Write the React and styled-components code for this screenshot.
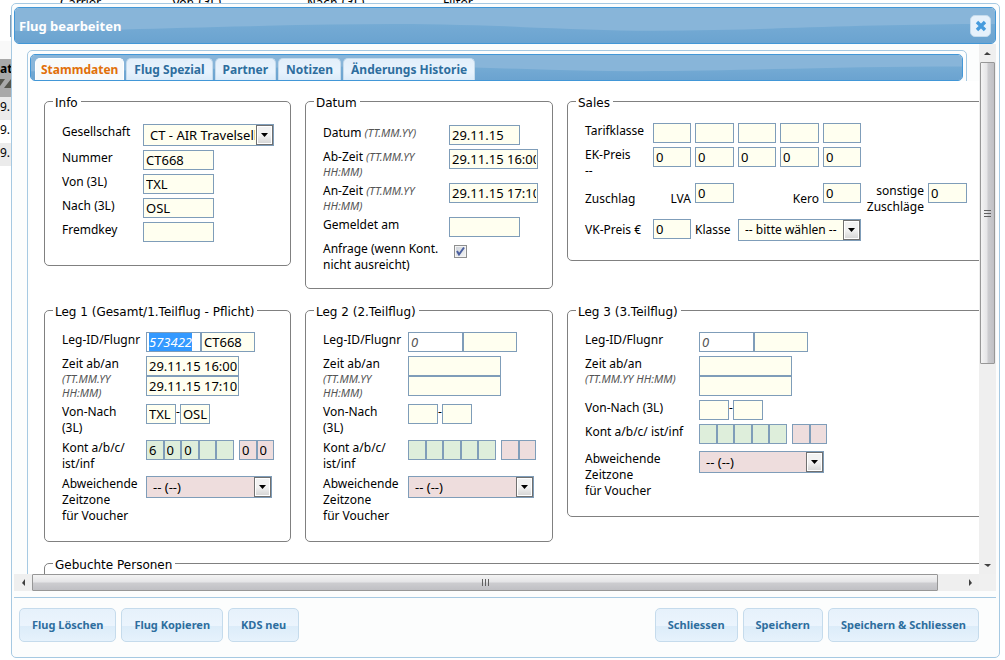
import React, { useEffect, useRef } from "react";
import styled, { createGlobalStyle, css } from "styled-components";

const UI = `"Noto Sans", "Open Sans", sans-serif`;
const VERDANA = `"DejaVu Sans", sans-serif`;

const GlobalStyle = createGlobalStyle`
  * { box-sizing: border-box; }
  html, body { margin: 0; height: 100%; overflow: hidden; background: #fff; }
  body { font: 12px/16px ${UI}; color: #000; }
  input, select, button { font: inherit; color: inherit; margin: 0; }
  ::selection { background: #3399ff; color: #fff; }
`;

/* ---------- page behind the dialog ---------- */

const Backdrop = styled.div`
  height: 100vh;
  overflow: hidden;
`;

const FilterHeads = styled.div`
  display: grid;
  grid-template-columns: 112px 135px 136px 1fr;
  padding-left: 60px;
  margin-top: -5px;
  height: 20px;
  font: 12px/16px ${VERDANA};
`;

const FilterEdge = styled.div`
  width: 11px;
  height: 22px;
  border-right: 1px solid #7f9db9;
  margin-bottom: 4px;
`;

const GridStub = styled.div`
  width: 300px;
  background: #f9f9f9;
  padding-top: 18px;
`;

const GridHead = styled.div`
  height: 38px;
  background: #a9a9a9;
  font-weight: 700;
  line-height: 20px;
  svg { display: block; }
`;

const GridRow = styled.div`
  height: 23px;
  line-height: 20px;
  background: ${(p) => (p.$even ? "#fff" : "#ebebeb")};
`;

/* ---------- dialog ---------- */

const Dialog = styled.section`
  position: fixed;
  inset: 3px 5px 2px 11px;
  display: flex;
  flex-direction: column;
  padding: 3px 3px 15px 2px;
  border: 1px solid #a6c9e2;
  border-radius: 5px;
  background: #fcfdfd;
`;

const barStyle = css`
  position: relative;
  border: 1px solid #4297d7;
  border-radius: 5px;
  overflow: hidden;
`;

const TitleBar = styled.header`
  ${barStyle}
  flex: none;
  display: flex;
  align-items: center;
  justify-content: space-between;
  height: 37px;
  padding: 0 4px;
`;

const Title = styled.h1`
  position: relative;
  margin: 0;
  font-size: 13px;
  line-height: 16px;
  color: #fff;
`;

const CloseButton = styled.button`
  position: relative;
  width: 21px;
  height: 22px;
  padding: 0;
  display: grid;
  place-items: center;
  border: 1px solid #c5dbec;
  border-radius: 5px;
  background: #e6f1fb;
`;

const GlossSvg = styled.svg`
  position: absolute;
  inset: 0;
  width: 100%;
  height: 100%;
`;

const Middle = styled.div`
  flex: 1;
  min-height: 0;
  display: grid;
  grid-template-columns: minmax(0, 1fr) 17px;
  grid-template-rows: minmax(0, 1fr) 17px;
  background: #f0f0f0;
`;

const Viewport = styled.div`
  overflow: hidden;
  padding: 6px 12px 0 13px;
  background: #fcfdfd;
`;

const Tabs = styled.div`
  height: 900px;
  padding: 3px 3px 0 2px;
  border: 1px solid #a6c9e2;
  border-radius: 5px;
`;

const TabBar = styled.nav`
  ${barStyle}
  height: 27px;
  padding: 3px 4px 0;
  display: flex;
  gap: 2px;
`;

const Tab = styled.button`
  position: relative;
  height: ${(p) => (p.$active ? 23 : 22)}px;
  padding: 0 ${(p) => (p.$active ? 5 : 7)}px;
  border: 1px solid ${(p) => (p.$active ? "#fff" : "#c5dbec")};
  border-bottom: 0;
  border-radius: 5px 5px 0 0;
  background: ${(p) =>
    p.$active ? "#f7fafb" : "linear-gradient(#e3effa, #e8f3fd 60%, #dbebf9)"};
  color: ${(p) => (p.$active ? "#e17009" : "#2e6e9e")};
  font-weight: 700;
  white-space: nowrap;
`;

const Panel = styled.div`
  width: calc(100% + 40px);
  height: 100%;
  padding: 10px 0 0 14px;
  background: #fff;
`;

const Band = styled.div`
  display: grid;
  grid-template-columns: 247px 248px minmax(480px, 1fr);
  align-items: start;
  gap: 14px;
  margin-bottom: 11px;
`;

const Group = styled.fieldset`
  min-width: 0;
  margin: 0;
  padding: ${(p) => p.$top ?? 12}px 8px ${(p) => p.$bottom ?? 17}px;
  border: 1px solid #808080;
  border-radius: 5px;
  ${(p) => p.$full && "grid-column: 1 / -1;"}
`;

const Legend = styled.legend`
  padding: 4px 3px 0 2px;
  font: 12px/16px ${VERDANA};
`;

const Rows = styled.div`
  display: grid;
  grid-template-columns: ${(p) => p.$label}px 1fr;
  gap: 4px 0;
  padding-left: 9px;
`;

const SalesGrid = styled.div`
  display: grid;
  grid-template-columns: 64px 38px 39px 38px 39px 38px 59px 39px;
  gap: 4px;
  padding-left: 9px;
`;

const Label = styled.label`
  display: block;
  white-space: pre-line;
  ${(p) => p.$spaced && "margin-top: 3px;"}
  ${(p) => p.$middle && "align-self: center;"}
  ${(p) => p.$right && "text-align: right; justify-self: end;"}
  ${(p) => p.$column && `grid-column: ${p.$column};`}
`;

const Hint = styled.em`
  font-size: 11px;
  line-height: 14px;
  color: #555;
`;

const HintLine = styled(Hint)`
  display: block;
`;

const Line = styled.div`
  display: flex;
  align-items: flex-start;
  ${(p) => p.$stack && "flex-direction: column;"}
`;

const tones = { cream: "#fffff0", white: "#fff", green: "#deeedb", pink: "#eedddd" };

const Text = styled.input`
  width: ${(p) => (p.$w ? `${p.$w}px` : "100%")};
  min-width: 0;
  height: 20px;
  padding: 0 1px 0 2px;
  border: 1px solid #7f9db9;
  border-radius: 0;
  background: ${(p) => tones[p.$tone || "cream"]};
  font-size: 13px;
  outline: 0;
  ${(p) => p.$italic && "font-style: italic; color: #555;"}
`;

const Cells = styled.div`
  display: flex;
  width: ${(p) => p.$w}px;
  margin-right: 5px;
`;

const SelectBox = styled.div`
  position: relative;
  align-self: start;
  width: ${(p) => (p.$w ? `${p.$w}px` : "auto")};
  ${(p) => p.$spaced && "margin-top: 3px;"}
  ${(p) => p.$column && `grid-column: ${p.$column};`}
  select {
    appearance: none;
    display: block;
    width: 100%;
    height: 22px;
    padding: 0 18px 0 6px;
    border: 1px solid #7f9db9;
    border-radius: 0;
    background: ${(p) => tones[p.$tone || "cream"]};
    font-size: ${(p) => (p.$large ? 13 : 12)}px;
    outline: 0;
  }
`;

const DropMark = styled.span`
  position: absolute;
  top: 1px;
  right: 1px;
  bottom: 1px;
  width: 17px;
  display: grid;
  place-items: center;
  border: 1px solid #707070;
  box-shadow: inset 0 0 0 1px #fff;
  background: linear-gradient(#f2f2f2 50%, #d4d4d4);
  pointer-events: none;
`;

const CheckWrap = styled.span`
  position: relative;
  width: 13px;
  height: 13px;
  margin: 4px 0 0 5px;
  input {
    appearance: none;
    display: block;
    width: 13px;
    height: 13px;
    border: 1px solid #8e8f8f;
    box-shadow: inset 0 0 0 1px #f4f4f4;
    background: linear-gradient(135deg, #cdd2d8, #f4f5f6);
  }
  svg {
    position: absolute;
    inset: 0;
    pointer-events: none;
  }
`;

/* ---------- scroll bars ---------- */

const ScrollBar = styled.div`
  display: flex;
  flex-direction: ${(p) => (p.$vertical ? "column" : "row")};
  padding: ${(p) => (p.$vertical ? "0 1px" : "0")};
  background: #efefef;
`;

const Arrow = styled.span`
  flex: 0 0 18px;
  display: grid;
  place-items: center;
`;

const Thumb = styled.span`
  flex: ${(p) => p.$grow} 0 0;
  display: grid;
  place-items: center;
  border: 1px solid #979797;
  border-radius: 1px;
  background: linear-gradient(
    ${(p) => (p.$vertical ? "to right" : "to bottom")},
    #f4f4f4, #e4e4e6 48%, #cdcdd0 52%, #c0c0c4
  );
`;

const Track = styled.span`
  flex: ${(p) => p.$grow} 0 0;
`;

/* ---------- footer ---------- */

const Footer = styled.footer`
  flex: none;
  display: flex;
  justify-content: space-between;
  margin-top: 6px;
  padding: 10px 17px 0 5px;
  border-top: 1px solid #a6c9e2;
`;

const ButtonSet = styled.div`
  display: flex;
  gap: 5px;
`;

const Button = styled.button`
  height: 34px;
  padding: 0 12px;
  border: 1px solid #c5dbec;
  border-radius: 5px;
  background: linear-gradient(#e6f1fb, #ebf4fd 52%, #dcecf9 54%, #e6f2fc);
  color: #2e6e9e;
  font-size: 11px;
  font-weight: 700;
  white-space: nowrap;
`;

/* ---------- parts ---------- */

const Gloss = () => (
  <GlossSvg viewBox="0 0 982 37" preserveAspectRatio="none" aria-hidden="true">
    <defs>
      <linearGradient id="gloss-low" x1="0" y1="0" x2="0" y2="1">
        <stop offset="0" stopColor="#75abd4" />
        <stop offset="1" stopColor="#6ba3d0" />
      </linearGradient>
    </defs>
    <rect width="982" height="37" fill="#88b5d9" />
    <path
      d="M0 24C90 25 240 17 380 17C480 17 560 24 640 24C740 24 840 17 982 17V37H0Z"
      fill="url(#gloss-low)"
    />
  </GlossSvg>
);

const arrows = {
  up: "M0 4L3 1L7 4Z",
  down: "M0 1H7L4 4Z",
  left: "M4 0V7L1 4Z",
  right: "M1 0V7L4 4Z",
};

const ArrowIcon = ({ dir }) => (
  <Arrow>
    <svg width="7" height="7" viewBox={dir === "up" || dir === "down" ? "0 -1 7 7" : "-1 0 7 7"}>
      <path d={arrows[dir]} fill="#404040" />
    </svg>
  </Arrow>
);

const Grip = ({ vertical }) => (
  <svg width="9" height="9" viewBox="0 0 9 9" shapeRendering="crispEdges">
    <path
      d={vertical ? "M1 1.5H8M1 4.5H8M1 7.5H8" : "M1.5 1V8M4.5 1V8M7.5 1V8"}
      stroke="#606060"
    />
  </svg>
);

const Select = ({ w, tone, column, label, id, value, large, spaced }) => (
  <SelectBox $w={w} $tone={tone} $column={column} $large={large} $spaced={spaced}>
    <select id={id} aria-label={label} defaultValue={value}>
      <option>{value}</option>
    </select>
    <DropMark>
      <svg width="7" height="4" viewBox="0 0 7 4">
        <path d="M0 0H7L3.5 4Z" fill="#000" />
      </svg>
    </DropMark>
  </SelectBox>
);

const LegGroup = ({ n, title, open, labelWidth, data, bottom }) => {
  const first = useRef(null);
  useEffect(() => {
    if (n === 1 && first.current) {
      first.current.focus({ preventScroll: true });
      first.current.select();
    }
  }, [n]);
  const id = (s) => `leg${n}-${s}`;
  return (
    <Group $bottom={bottom}>
      <Legend>{title}</Legend>
      <Rows $label={labelWidth}>
        <Label htmlFor={id("id")}>Leg-ID/Flugnr</Label>
        <Line>
          <Text ref={first} id={id("id")} $w={55} $tone="white" $italic defaultValue={data.id} />
          <Text $w={54} aria-label="Flugnr" defaultValue={data.nr} />
        </Line>

        <Label htmlFor={id("ab")}>
          Zeit ab/an
          {open ? (
            <HintLine>(TT.MM.YY HH:MM)</HintLine>
          ) : (
            <>
              <HintLine>(TT.MM.YY</HintLine>
              <HintLine>HH:MM)</HintLine>
            </>
          )}
        </Label>
        <Line $stack>
          <Text id={id("ab")} $w={93} defaultValue={data.ab} />
          <Text $w={93} aria-label="Zeit an" defaultValue={data.an} />
        </Line>

        <Label htmlFor={id("von")}>{open ? "Von-Nach (3L)" : "Von-Nach\n(3L)"}</Label>
        <Line>
          <Text id={id("von")} $w={30} defaultValue={data.von} />-
          <Text $w={30} aria-label="Nach" defaultValue={data.nach} />
        </Line>

        <Label htmlFor={id("k0")}>{open ? "Kont a/b/c/ ist/inf" : "Kont a/b/c/\nist/inf"}</Label>
        <Line>
          <Cells $w={88}>
            {data.kont.map((v, i) => (
              <Text key={i} id={id(`k${i}`)} aria-label={`Kont ${i + 1}`} $tone="green" defaultValue={v} />
            ))}
          </Cells>
          <Cells $w={35}>
            {data.inf.map((v, i) => (
              <Text key={i} aria-label={`inf ${i + 1}`} $tone="pink" defaultValue={v} />
            ))}
          </Cells>
        </Line>

        <Label htmlFor={id("zone")} $spaced={open}>{"Abweichende\nZeitzone\nfür Voucher"}</Label>
        <Select id={id("zone")} w={open ? 125 : 126} tone="pink" value="-- (--)" large spaced={open} />
      </Rows>
    </Group>
  );
};

const emptyLeg = {
  id: "0", nr: "", ab: "", an: "", von: "", nach: "",
  kont: ["", "", "", "", ""], inf: ["", ""],
};
const firstLeg = {
  id: "573422", nr: "CT668", ab: "29.11.15 16:00", an: "29.11.15 17:10",
  von: "TXL", nach: "OSL", kont: ["6", "0", "0", "", ""], inf: ["0", "0"],
};

export default function App() {
  return (
    <>
      <GlobalStyle />
      <Backdrop>
        <FilterHeads>
          <span>Carrier</span>
          <span>Von (3L)</span>
          <span>Nach (3L)</span>
          <span>Filter</span>
        </FilterHeads>
        <FilterEdge />
        <GridStub>
          <GridHead>
            at
            <svg width="14" height="10" viewBox="0 0 14 10">
              <path d="M0 0H5L0 7ZM11 0V9H4Z" fill="#55554d" />
            </svg>
          </GridHead>
          <GridRow>9.</GridRow>
          <GridRow $even>9.</GridRow>
          <GridRow>9.</GridRow>
        </GridStub>
      </Backdrop>

      <Dialog role="dialog" aria-labelledby="dialog-title">
        <TitleBar>
          <Gloss />
          <Title id="dialog-title">Flug bearbeiten</Title>
          <CloseButton type="button" aria-label="Schließen">
            <svg width="12" height="12" viewBox="0 0 12 12">
              <path d="M2 2L10 10M10 2L2 10" stroke="#469bdd" strokeWidth="3.4" />
            </svg>
          </CloseButton>
        </TitleBar>

        <Middle>
          <Viewport>
            <Tabs>
              <TabBar>
                <Gloss />
                <Tab type="button" $active>Stammdaten</Tab>
                <Tab type="button">Flug Spezial</Tab>
                <Tab type="button">Partner</Tab>
                <Tab type="button">Notizen</Tab>
                <Tab type="button">Änderungs Historie</Tab>
              </TabBar>
              <Panel>
                <Band>
                  <Group $top={13} $bottom={23}>
                    <Legend>Info</Legend>
                    <Rows $label={81}>
                      <Label htmlFor="airline">Gesellschaft</Label>
                      <Select id="airline" w={131} value="CT - AIR Travelseller" large />
                      <Label htmlFor="number">Nummer</Label>
                      <Text id="number" $w={71} defaultValue="CT668" />
                      <Label htmlFor="from">Von (3L)</Label>
                      <Text id="from" $w={71} defaultValue="TXL" />
                      <Label htmlFor="to">Nach (3L)</Label>
                      <Text id="to" $w={71} defaultValue="OSL" />
                      <Label htmlFor="key">Fremdkey</Label>
                      <Text id="key" $w={71} />
                    </Rows>
                  </Group>

                  <Group $top={14} $bottom={15}>
                    <Legend>Datum</Legend>
                    <Rows $label={126}>
                      <Label htmlFor="date">Datum <Hint>(TT.MM.YY)</Hint></Label>
                      <Text id="date" $w={71} defaultValue="29.11.15" />
                      <Label htmlFor="dep">
                        Ab-Zeit <Hint>(TT.MM.YY</Hint>
                        <HintLine>HH:MM)</HintLine>
                      </Label>
                      <Text id="dep" $w={89} defaultValue="29.11.15 16:00" />
                      <Label htmlFor="arr">
                        An-Zeit <Hint>(TT.MM.YY</Hint>
                        <HintLine>HH:MM)</HintLine>
                      </Label>
                      <Text id="arr" $w={89} defaultValue="29.11.15 17:10" />
                      <Label htmlFor="reported">Gemeldet am</Label>
                      <Text id="reported" $w={71} />
                      <Label htmlFor="request">{"Anfrage (wenn Kont.\nnicht ausreicht)"}</Label>
                      <CheckWrap>
                        <input id="request" type="checkbox" defaultChecked />
                        <svg width="13" height="13" viewBox="0 0 13 13">
                          <path d="M3 6L5 9.5L10 2.5" fill="none" stroke="#4b5f9f" strokeWidth="2" />
                        </svg>
                      </CheckWrap>
                    </Rows>
                  </Group>

                  <Group $bottom={19}>
                    <Legend>Sales</Legend>
                    <SalesGrid>
                      <Label htmlFor="tk0">Tarifklasse</Label>
                      {[0, 1, 2, 3, 4].map((i) => (
                        <Text key={i} id={`tk${i}`} aria-label={`Tarifklasse ${i + 1}`} />
                      ))}
                      <Label htmlFor="ek0" $column="1">{"EK-Preis\n--"}</Label>
                      {[0, 1, 2, 3, 4].map((i) => (
                        <Text key={i} id={`ek${i}`} aria-label={`EK-Preis ${i + 1}`} defaultValue="0" />
                      ))}
                      <Label as="span" $middle $column="1">Zuschlag</Label>
                      <Label htmlFor="lva" $middle $right>LVA</Label>
                      <Text id="lva" defaultValue="0" />
                      <Label htmlFor="kero" $middle $right $column="5">Kero</Label>
                      <Text id="kero" defaultValue="0" />
                      <Label htmlFor="other" $right>{"sonstige\nZuschläge"}</Label>
                      <Text id="other" defaultValue="0" />
                      <Label htmlFor="vk" $middle>VK-Preis €</Label>
                      <Text id="vk" defaultValue="0" />
                      <Label htmlFor="class" $middle>Klasse</Label>
                      <Select id="class" column="4 / span 3" value="-- bitte wählen --" />
                    </SalesGrid>
                  </Group>
                </Band>

                <Band>
                  <LegGroup n={1} title="Leg 1 (Gesamt/1.Teilflug - Pflicht)" labelWidth={84} data={firstLeg} />
                  <LegGroup n={2} title="Leg 2 (2.Teilflug)" labelWidth={85} data={emptyLeg} />
                  <LegGroup n={3} title="Leg 3 (3.Teilflug)" labelWidth={114} data={emptyLeg} open bottom={17} />
                </Band>

                <Band>
                  <Group $full>
                    <Legend>Gebuchte Personen</Legend>
                  </Group>
                </Band>
              </Panel>
            </Tabs>
          </Viewport>
          <ScrollBar $vertical aria-hidden="true">
            <ArrowIcon dir="up" />
            <Thumb $vertical $grow={302}><Grip vertical /></Thumb>
            <Track $grow={193} />
            <ArrowIcon dir="down" />
          </ScrollBar>
          <ScrollBar aria-hidden="true">
            <ArrowIcon dir="left" />
            <Thumb $grow={907}><Grip /></Thumb>
            <Track $grow={23} />
            <ArrowIcon dir="right" />
          </ScrollBar>
        </Middle>

        <Footer>
          <ButtonSet>
            <Button type="button">Flug Löschen</Button>
            <Button type="button">Flug Kopieren</Button>
            <Button type="button">KDS neu</Button>
          </ButtonSet>
          <ButtonSet>
            <Button type="button">Schliessen</Button>
            <Button type="button">Speichern</Button>
            <Button type="button">Speichern &amp; Schliessen</Button>
          </ButtonSet>
        </Footer>
      </Dialog>
    </>
  );
}
